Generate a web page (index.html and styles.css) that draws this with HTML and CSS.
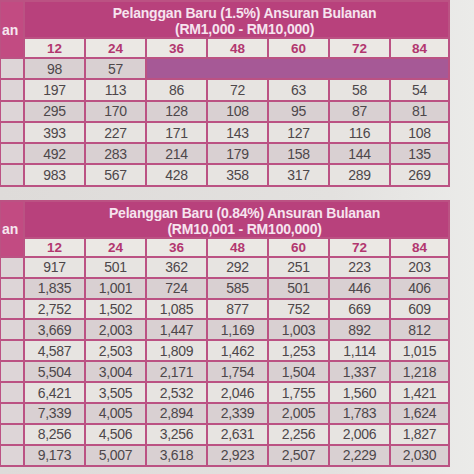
FILE: index.html
```html
<!DOCTYPE html>
<html lang="ms">
<head>
<meta charset="utf-8">
<title>Ansuran Bulanan</title>
<link rel="stylesheet" href="styles.css">
</head>
<body>
<div class="page">
  <table class="rates first">
    <colgroup>
      <col class="c-side"><col class="c"><col class="c"><col class="c"><col class="c"><col class="c"><col class="c"><col class="c-last">
    </colgroup>
    <thead>
      <tr class="title-row">
        <th class="side-head" rowspan="2">an</th>
        <th class="title" colspan="7">Pelanggan Baru (1.5%) Ansuran Bulanan<br>(RM1,000 - RM10,000)</th>
      </tr>
      <tr class="months">
        <th>12</th><th>24</th><th>36</th><th>48</th><th>60</th><th>72</th><th>84</th>
      </tr>
    </thead>
    <tbody>
      <tr class="dark"><td class="side"></td><td>98</td><td>57</td><td class="na" colspan="5"></td></tr>
      <tr class="light"><td class="side"></td><td>197</td><td>113</td><td>86</td><td>72</td><td>63</td><td>58</td><td>54</td></tr>
      <tr class="dark"><td class="side"></td><td>295</td><td>170</td><td>128</td><td>108</td><td>95</td><td>87</td><td>81</td></tr>
      <tr class="light"><td class="side"></td><td>393</td><td>227</td><td>171</td><td>143</td><td>127</td><td>116</td><td>108</td></tr>
      <tr class="dark"><td class="side"></td><td>492</td><td>283</td><td>214</td><td>179</td><td>158</td><td>144</td><td>135</td></tr>
      <tr class="light"><td class="side"></td><td>983</td><td>567</td><td>428</td><td>358</td><td>317</td><td>289</td><td>269</td></tr>
    </tbody>
  </table>

  <table class="rates second">
    <colgroup>
      <col class="c-side"><col class="c"><col class="c"><col class="c"><col class="c"><col class="c"><col class="c"><col class="c-last">
    </colgroup>
    <thead>
      <tr class="title-row">
        <th class="side-head" rowspan="2">an</th>
        <th class="title" colspan="7">Pelanggan Baru (0.84%) Ansuran Bulanan<br>(RM10,001 - RM100,000)</th>
      </tr>
      <tr class="months">
        <th>12</th><th>24</th><th>36</th><th>48</th><th>60</th><th>72</th><th>84</th>
      </tr>
    </thead>
    <tbody>
      <tr class="light"><td class="side"></td><td>917</td><td>501</td><td>362</td><td>292</td><td>251</td><td>223</td><td>203</td></tr>
      <tr class="dark"><td class="side"></td><td>1,835</td><td>1,001</td><td>724</td><td>585</td><td>501</td><td>446</td><td>406</td></tr>
      <tr class="light"><td class="side"></td><td>2,752</td><td>1,502</td><td>1,085</td><td>877</td><td>752</td><td>669</td><td>609</td></tr>
      <tr class="dark"><td class="side"></td><td>3,669</td><td>2,003</td><td>1,447</td><td>1,169</td><td>1,003</td><td>892</td><td>812</td></tr>
      <tr class="light"><td class="side"></td><td>4,587</td><td>2,503</td><td>1,809</td><td>1,462</td><td>1,253</td><td>1,114</td><td>1,015</td></tr>
      <tr class="dark"><td class="side"></td><td>5,504</td><td>3,004</td><td>2,171</td><td>1,754</td><td>1,504</td><td>1,337</td><td>1,218</td></tr>
      <tr class="light"><td class="side"></td><td>6,421</td><td>3,505</td><td>2,532</td><td>2,046</td><td>1,755</td><td>1,560</td><td>1,421</td></tr>
      <tr class="dark"><td class="side"></td><td>7,339</td><td>4,005</td><td>2,894</td><td>2,339</td><td>2,005</td><td>1,783</td><td>1,624</td></tr>
      <tr class="light"><td class="side"></td><td>8,256</td><td>4,506</td><td>3,256</td><td>2,631</td><td>2,256</td><td>2,006</td><td>1,827</td></tr>
      <tr class="dark"><td class="side"></td><td>9,173</td><td>5,007</td><td>3,618</td><td>2,923</td><td>2,507</td><td>2,229</td><td>2,030</td></tr>
    </tbody>
  </table>
</div>
</body>
</html>
```

FILE: styles.css
```css
html, body {
  margin: 0;
  padding: 0;
}
body {
  width: 474px;
  height: 474px;
  overflow: hidden;
  background: linear-gradient(90deg, #dedbd9 0%, #e3e1df 70%, #ebebe9 100%);
  font-family: "Liberation Sans", Arial, sans-serif;
}
.page {
  display: flex;
  flex-direction: column;
  gap: 13px;
}
.rates {
  border-collapse: collapse;
  table-layout: fixed;
  width: 449px;
  margin-left: -1px;
}
.c-side { width: 24px; }
.c { width: 61px; }
.c-last { width: 59px; }

.rates th, .rates td {
  border: 2px solid #bb5283;
  padding: 0;
  text-align: center;
}
.title-row th {
  height: 32px;
}
.side-head {
  background: #c24b82;
  color: #f6e6ef;
  font-size: 14px;
  font-weight: bold;
  text-align: left !important;
  padding-left: 1px !important;
  border-right: 1px solid #d88fb2 !important;
}
.title {
  background: #b8417c;
  color: #f6e4ef;
  font-size: 14px;
  font-weight: bold;
  line-height: 16px;
  vertical-align: top;
  padding: 3px 0 0 16px !important;
  letter-spacing: -0.2px;
}
.months th {
  height: 17px;
  background: #ebe8e4;
  color: #b2376f;
  font-size: 13.5px;
  font-weight: bold;
}
.first .months th { height: 18px; }
.rates td {
  font-size: 14px;
  letter-spacing: -0.3px;
  color: #4d474a;
}
.first td { height: 19.3px; }
.second td { height: 18.9px; }
.light td { background: #e7e4e1; }
.dark td { background: #d9d0d2; }
.rates td.side { background: #ddd5d7; }
.rates td.na { background: #a65996; }
```
